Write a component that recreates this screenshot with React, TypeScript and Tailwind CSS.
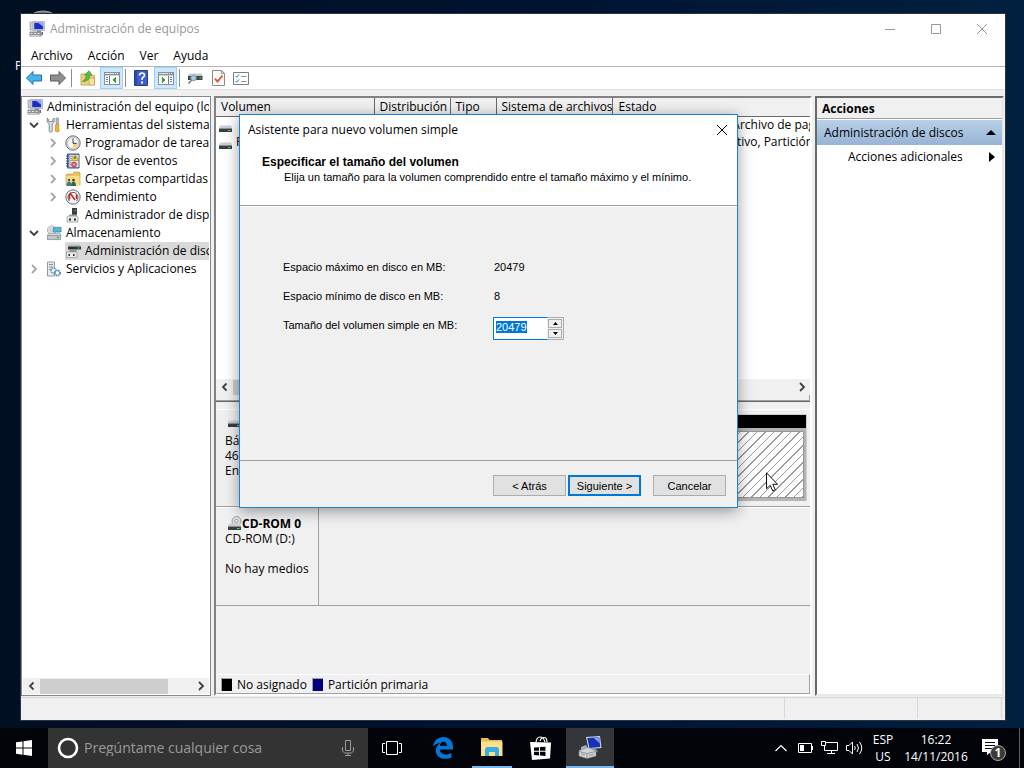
import React, { useEffect, useRef } from 'react';

type IconProps = { className?: string };

const ComputerIcon: React.FC<IconProps> = ({ className = 'w-4 h-4' }) => (
    <svg viewBox="0 0 16 16" className={`shrink-0 ${className}`} aria-hidden="true">
        <path d="M1 1h4v8H1z" fill="#c9ccd0" stroke="#8a8d90" strokeWidth=".6" />
        <path d="M4 .5h11.5v9H4z" fill="#dfe3e8" stroke="#8d949c" strokeWidth=".6" />
        <path d="M5.200 1.700h9v6.600h-9z" fill="#1c2fc0" />
        <path d="M9 1.700h5.200v4z" fill="#8ea4f4" />
        <path d="M8 9.500h4v1.500H8z" fill="#8b9097" />
        <path d="M.5 10.500h12v5H.5z" fill="#8d9298" />
        <path d="M1.500 12h2v1h-2zM5 12h2v1H5zM8.500 12h2v1h-2zM1.500 14h9v.8h-9z" fill="#e4e6e8" />
        <path d="M12.500 11h1.500v3h-1.500z" fill="#5f666d" />
    </svg>
);

const ToolsIcon = () => (
    <svg viewBox="0 0 16 16" className="w-4 h-4 shrink-0" aria-hidden="true">
        <path d="M1.200 1v4l2 2v7.500q1.500 1.500 3 0V7l2-2V1L6.700 2.500V4.500h-4V2.500z" fill="#dcdfe1" stroke="#6f7478" strokeWidth=".8" />
        <path d="M10 1h2.500v6H10z" fill="#b4b9bd" stroke="#777c80" strokeWidth=".5" />
        <path d="M9.200 8q2-1.500 4 0l-.6 2 .6 4q-2 2-4 0l.6-4z" fill="#f2b632" stroke="#b27a0c" strokeWidth=".6" />
    </svg>
);

const ClockIcon = () => (
    <svg viewBox="0 0 16 16" className="w-4 h-4 shrink-0" aria-hidden="true">
        <circle cx="8" cy="8" r="7.200" fill="#d9dde0" stroke="#6c7276" />
        <circle cx="8" cy="8" r="5.400" fill="#fdfdf8" stroke="#a7adb1" strokeWidth=".6" />
        <path d="M8 8h5a5 5 0 0 1-5 5z" fill="#f3ce83" />
        <path d="M8 3.500V8.300h3.500" fill="none" stroke="#33383c" />
    </svg>
);

const EventIcon = () => (
    <svg viewBox="0 0 16 16" className="w-4 h-4 shrink-0" aria-hidden="true">
        <path d="M2.500 1h11.500v14H2.500z" fill="#7d99c6" stroke="#3b5888" />
        <path d="M4.500 2h9v12h-9z" fill="#d8e3f3" />
        <path d="M5 3.500h3M5 5.500h2M5 7.500h1.500M5 9.500h1M5 11.500h1" stroke="#6f8fbe" strokeWidth=".8" />
        <path d="M1 3h3M1 5.500h3M1 8h3M1 10.500h3M1 13h3" stroke="#50565c" />
        <path d="M10 1.500l3.500 6H6.500z" fill="#f9d62e" stroke="#a38300" strokeWidth=".6" />
        <path d="M10 3.500v2.500" stroke="#222" />
        <circle cx="9" cy="11.500" r="2.800" fill="#d8383b" />
        <path d="M7.800 10.300l2.400 2.400M10.200 10.300l-2.400 2.400" stroke="#fff" strokeWidth=".8" />
    </svg>
);

const SharedFolderIcon = () => (
    <svg viewBox="0 0 16 16" className="w-4 h-4 shrink-0" aria-hidden="true">
        <path d="M1 4l1-1h6l1-2h5l1 1v12H1z" fill="#e9c55c" stroke="#b08e31" strokeWidth=".6" />
        <path d="M1.500 5h13v9.500h-13z" fill="#f7de8e" />
        <circle cx="4" cy="9" r="1.300" fill="#7b4f2e" />
        <path d="M1.500 15q0-4.500 2.500-4.500t2.500 4.500z" fill="#3a7b9c" />
        <circle cx="8.500" cy="9" r="1.300" fill="#4b3120" />
        <path d="M6 15q0-4.500 2.500-4.500t2.500 4.500z" fill="#2e6a42" />
    </svg>
);

const GaugeIcon = () => (
    <svg viewBox="0 0 16 16" className="w-4 h-4 shrink-0" aria-hidden="true">
        <circle cx="8" cy="8" r="7.200" fill="#eceeef" stroke="#6c7276" />
        <path d="M4.500 12a5 5 0 1 1 7 0" fill="#fff" stroke="#3b4044" strokeWidth=".8" />
        <path d="M4.500 10.500v-5l1-1 4.500 6.500M11.500 5.500V10" fill="none" stroke="#d02424" strokeWidth="1.600" />
    </svg>
);

const DeviceIcon = () => (
    <svg viewBox="0 0 16 16" className="w-4 h-4 shrink-0" aria-hidden="true">
        <path d="M7 1h5v7H7z" fill="#3a3d40" />
        <path d="M9.500 3h1.500v1H9.500z" fill="#3bdd3b" />
        <path d="M4 7.500h8v2H4z" fill="#9fa3a6" />
        <path d="M3 9h9l1 1.500V15H2v-4.500z" fill="#e7e7e7" stroke="#8b8f92" strokeWidth=".7" />
        <path d="M4 11.500h2v2H4zM9 11.500h2v2H9z" fill="#26292b" />
    </svg>
);

const StorageIcon = () => (
    <svg viewBox="0 0 17 16" className="w-4 h-4 shrink-0" aria-hidden="true">
        <circle cx="6" cy="5" r="4.500" fill="#dfe2e4" stroke="#92989c" strokeWidth=".7" />
        <circle cx="6" cy="5" r="1.200" fill="#fff" stroke="#8b9094" strokeWidth=".6" />
        <path d="M8 2h8v5H8z" fill="#55b6de" stroke="#2d7fa6" strokeWidth=".7" />
        <path d="M3 8.500h12l1 2H1.500z" fill="#eceeef" stroke="#84898d" strokeWidth=".6" />
        <path d="M1.500 10.500h14V15h-14z" fill="#c3c7ca" stroke="#74797d" strokeWidth=".7" />
        <path d="M11.500 12h2v1.500h-2z" fill="#24b924" />
    </svg>
);

const DiskMgmtIcon = () => (
    <svg viewBox="0 0 16 16" className="w-4 h-4 shrink-0" aria-hidden="true">
        <path d="M4 1.500h11l1 2H3z" fill="#b9bdc0" />
        <path d="M3 3.500h13v3H3z" fill="#303336" />
        <path d="M12.500 4.500h2v1h-2z" fill="#33e033" />
        <path d="M4.500 7h7v2h-7z" fill="#8f9396" />
        <path d="M1.500 9h10.500v5.500H1.500z" fill="#ececec" stroke="#8b8f92" strokeWidth=".7" />
        <path d="M3.500 11h1.500v2H3.500zM8 11h1.500v2H8z" fill="#26292b" />
    </svg>
);

const ServicesIcon = () => (
    <svg viewBox="0 0 16 16" className="w-4 h-4 shrink-0" aria-hidden="true">
        <path d="M1.500 1h7v14h-7z" fill="#e8eaec" stroke="#7e8488" strokeWidth=".8" />
        <path d="M3 3.500h4M3 6h4M3 8.500h3" stroke="#868c91" />
        <circle cx="7.500" cy="9.500" r="2.400" fill="#fff" stroke="#6e93b4" strokeWidth="1.600" strokeDasharray="1.500 .6" />
        <circle cx="11.500" cy="12" r="2.600" fill="#fff" stroke="#5c8bb6" strokeWidth="1.900" strokeDasharray="1.500 .6" />
    </svg>
);

const DriveIcon: React.FC<{ cd?: boolean }> = ({ cd }) => (
    <svg viewBox="0 0 15 15" className="w-[15px] h-[15px] shrink-0" aria-hidden="true">
        {cd && <circle cx="9.500" cy="5" r="4.500" fill="#dfe1e2" stroke="#989c9e" />}
        {cd && <circle cx="9.500" cy="5" r="1.700" fill="#f4f4f4" stroke="#989c9e" />}
        <path d="M2 7.500h11l1 3H1z" fill="#cbcfd3" />
        <path d="M1 10.500h13v3.500H1z" fill="#3b3e41" />
        <path d="M10 12h2.500v1H10z" fill="#3fe53f" />
    </svg>
);

const Chevron: React.FC<{ dir: 'left' | 'right' | 'down'; light?: boolean }> = ({ dir, light }) => {
    const d = { left: 'M6.500 1.500L3 5l3.500 3.500', right: 'M3 1L7 5 3 9', down: 'M1 3l4 4 4-4' }[dir];
    return (
        <svg viewBox="0 0 10 10" className="w-[10px] h-[10px] shrink-0" aria-hidden="true">
            <path d={d} fill="none" stroke={light ? '#a6a6a6' : '#404040'} strokeWidth="1.800" />
        </svg>
    );
};

const Arrow: React.FC<{ forward?: boolean }> = ({ forward }) => (
    <svg viewBox="0 0 18 16" className="w-[18px] h-4" aria-hidden="true">
        {forward
            ? <path d="M16.500 8L10 1.500V5H1.500v6H10v3.500z" fill="#8f8f8f" stroke="#5c5c5c" />
            : <path d="M1.500 8L8 1.500V5h8.500v6H8v3.500z" fill="#45b4ec" stroke="#1f71b4" />}
    </svg>
);

const PaneIcon: React.FC<{ right?: boolean }> = ({ right }) => (
    <svg viewBox="0 0 16 16" className="w-4 h-4" shapeRendering="crispEdges" aria-hidden="true">
        <path d="M0 2h16v13H0z" fill="#8b9096" />
        <path d="M1 6h14v8H1z" fill="#fff" />
        <path d="M1 3h9v1H1z" fill="#dfe6ee" />
        <path d="M11 3h1v1h-1zM13 3h1v1h-1z" fill="#fff" />
        <path d="M1 5h14v1H1z" fill="#c9d0d8" />
        {right
            ? <path d="M10 6h1v8h-1zM12 7h2v1h-2zM12 9h2v1h-2zM12 11h2v1h-2z" fill="#6b7d92" />
            : <path d="M5 6h1v8H5zM2 7h2v1H2zM2 9h2v1H2zM2 11h2v1H2z" fill="#6b7d92" />}
        {right
            ? <path d="M4 7l4 3-4 3z" fill="#32a532" />
            : <path d="M12 7l-4 3 4 3z" fill="#32a532" />}
    </svg>
);

const UpFolderIcon = () => (
    <svg viewBox="0 0 16 16" className="w-4 h-4" aria-hidden="true">
        <path d="M1 4h5l1 1.500h7.500V15H1z" fill="#efd182" stroke="#b99a45" strokeWidth=".8" />
        <path d="M9 8h5.500v7H9z" fill="#f6e0a0" stroke="#b99a45" strokeWidth=".6" />
        <path d="M2.500 11.500q3-1.500 4-6.500H4.500L9 .8 12 5h-2q-1 7-7.500 6.500z" fill="#55c03c" stroke="#2d8820" strokeWidth=".6" />
    </svg>
);

const HelpIcon = () => (
    <svg viewBox="0 0 14 16" className="w-[14px] h-4" aria-hidden="true">
        <path d="M.5.500h13v15H.5z" fill="#3c5fc8" stroke="#223f91" />
        <path d="M1 1h2v14H1z" fill="#2c4aa6" />
        <path d="M5.500 5.500q0-2.500 2.500-2.500t2.500 2.300q0 1.200-1.400 2T8 9.800" fill="none" stroke="#fff" strokeWidth="1.700" />
        <path d="M7 11.500h2v2H7z" fill="#fff" />
    </svg>
);

const RescanIcon = () => (
    <svg viewBox="0 0 16 16" className="w-4 h-4" aria-hidden="true">
        <path d="M2 3.500h12.500l1 2.500H1z" fill="#c5c9cc" />
        <path d="M1 6h14.500v4H1z" fill="#3d4448" />
        <path d="M12.500 7.500h2v1h-2z" fill="#3fe53f" />
        <circle cx="6.500" cy="8" r="2.800" fill="#a5c8df" stroke="#8d969c" />
        <path d="M4.500 10.300L1.500 13.500" stroke="#777" strokeWidth="1.600" />
    </svg>
);

const CheckPageIcon = () => (
    <svg viewBox="0 0 13 16" className="w-[13px] h-4" aria-hidden="true">
        <path d="M.5.500h9l3 3v12H.5z" fill="#fafafa" stroke="#8d8d8d" />
        <path d="M9.500.500v3h3" fill="none" stroke="#8d8d8d" />
        <path d="M3 8.500l2.500 3 5-6" fill="none" stroke="#e2501c" strokeWidth="1.800" />
    </svg>
);

const ListIcon = () => (
    <svg viewBox="0 0 16 13" className="w-4 h-[13px]" aria-hidden="true">
        <path d="M.5.500h15v12H.5z" fill="#fff" stroke="#7b7f83" />
        <path d="M2.500 4l1.200 1.200L6 2.500M2.500 9l1.200 1.200L6 7.500" fill="none" stroke="#2f76b8" />
        <path d="M8 4.500h5.500M8 9.500h5.500" stroke="#8d9297" />
    </svg>
);

const treeItems = [
    { label: 'Administración del equipo (local)', icon: <ComputerIcon />, pad: 'pl-[4px]' },
    { label: 'Herramientas del sistema', icon: <ToolsIcon />, pad: 'pl-[6px]', chevron: 'down' as const },
    { label: 'Programador de tareas', icon: <ClockIcon />, pad: 'pl-[25px]', chevron: 'right' as const },
    { label: 'Visor de eventos', icon: <EventIcon />, pad: 'pl-[25px]', chevron: 'right' as const },
    { label: 'Carpetas compartidas', icon: <SharedFolderIcon />, pad: 'pl-[25px]', chevron: 'right' as const },
    { label: 'Rendimiento', icon: <GaugeIcon />, pad: 'pl-[25px]', chevron: 'right' as const },
    { label: 'Administrador de dispositivos', icon: <DeviceIcon />, pad: 'pl-[42px]' },
    { label: 'Almacenamiento', icon: <StorageIcon />, pad: 'pl-[6px]', chevron: 'down' as const },
    { label: 'Administración de discos', icon: <DiskMgmtIcon />, pad: 'ml-[42px]', selected: true },
    { label: 'Servicios y Aplicaciones', icon: <ServicesIcon />, pad: 'pl-[6px]', chevron: 'right' as const },
];

const volumes = [
    { name: '', status: 'Correcto (Arranque, Archivo de paginación, Volcado)' },
    { name: 'Reservado para el sistema', status: 'Correcto (Sistema, Activo, Partición primaria)' },
];

const headCell = 'h-[18px] p-0 pl-[5px] font-normal text-left whitespace-nowrap border-r border-[#696969] bg-[#f0f0f0]';
const iconButton = 'flex items-center justify-center h-[22px] w-6';
const wideButton = 'flex items-center justify-center h-[22px] w-[26px]';
const activeButton = 'flex items-center justify-center h-[22px] w-[23px] bg-[#cce8ff] border border-[#99d1ff]';

const TitleBar = () => (
    <header className="flex items-center h-[31px] pl-[8px] pb-[2px] bg-white text-[#999]">
        <ComputerIcon />
        <h1 className="pl-[5px] flex-1">Administración de equipos</h1>
        <button type="button" aria-label="Minimizar" className="w-[46px] flex justify-center">
            <svg viewBox="0 0 10 10" className="w-[10px] h-[10px]"><path d="M0 5.500h10" stroke="#999" /></svg>
        </button>
        <button type="button" aria-label="Maximizar" className="w-[46px] flex justify-center">
            <svg viewBox="0 0 10 10" className="w-[10px] h-[10px]"><path d="M.5.500h9v9h-9z" fill="none" stroke="#999" /></svg>
        </button>
        <button type="button" aria-label="Cerrar" className="w-[46px] flex justify-center">
            <svg viewBox="0 0 10 10" className="w-[10px] h-[10px]"><path d="M0 0l10 10M10 0L0 10" stroke="#999" /></svg>
        </button>
    </header>
);

const Toolbar = () => (
    <div className="flex items-center h-[23px] pl-[1px] bg-white border-b border-[#dfdfdf]">
        <button type="button" aria-label="Atrás" className={iconButton}><Arrow /></button>
        <button type="button" aria-label="Adelante" className={iconButton}><Arrow forward /></button>
        <span className="w-px h-[18px] ml-[1px] mr-[4px] bg-[#8d8d8d]" />
        <button type="button" aria-label="Subir" className={iconButton}><UpFolderIcon /></button>
        <button type="button" aria-label="Mostrar árbol" className={activeButton}><PaneIcon /></button>
        <span className="w-px h-[18px] mx-[2px] bg-[#8d8d8d]" />
        <button type="button" aria-label="Ayuda" className={wideButton}><HelpIcon /></button>
        <button type="button" aria-label="Mostrar acciones" className={activeButton}><PaneIcon right /></button>
        <span className="w-px h-[18px] mx-[2px] bg-[#8d8d8d]" />
        <button type="button" aria-label="Volver a examinar" className={wideButton}><RescanIcon /></button>
        <button type="button" aria-label="Propiedades" className="flex items-center justify-center h-[22px] w-5"><CheckPageIcon /></button>
        <button type="button" aria-label="Configuración" className={wideButton}><ListIcon /></button>
    </div>
);

const TreePanel = () => (
    <nav aria-label="Consola" className="w-[190px] shrink-0 flex flex-col bg-white border border-[#828790] p-px">
        <ul className="flex-1">
            {treeItems.map(item => (
                <li key={item.label} className={`flex items-center h-[18px] overflow-hidden ${item.pad} ${item.selected ? 'bg-[#d9d9d9]' : ''}`}>
                    {item.chevron && (
                        <span className="w-[17px] shrink-0">
                            <Chevron dir={item.chevron} light={item.chevron === 'right'} />
                        </span>
                    )}
                    {item.icon}
                    <span className="flex-1 leading-[18px] pl-[4px] whitespace-nowrap overflow-hidden">{item.label}</span>
                </li>
            ))}
        </ul>
        <div className="flex items-center h-[16px] bg-[#f0f0f0]">
            <button type="button" aria-label="Izquierda" className="w-[17px] flex justify-center"><Chevron dir="left" /></button>
            <div className="flex-1 h-[15px]"><div className="w-[84%] h-full bg-[#cdcdcd]" /></div>
            <button type="button" aria-label="Derecha" className="w-[17px] flex justify-center"><Chevron dir="right" /></button>
        </div>
    </nav>
);

const DiskPanel = () => (
    <main className="flex-1 min-w-0 flex flex-col border-2 border-t-[#828282] border-l-[#828282] border-r-white border-b-white bg-[#f0f0f0]">
        <div className="flex flex-col h-[303px] overflow-hidden bg-white">
            <table className="w-full table-fixed border-collapse">
                <colgroup>
                    <col className="w-[158px]" />
                    <col className="w-[76px]" />
                    <col className="w-[46px]" />
                    <col className="w-[116px]" />
                    <col />
                </colgroup>
                <thead>
                    <tr className="border-b border-[#696969]">
                        <th className={headCell}>Volumen</th>
                        <th className={headCell}>Distribución</th>
                        <th className={headCell}>Tipo</th>
                        <th className={headCell}>Sistema de archivos</th>
                        <th className="h-[18px] p-0 pl-[6px] font-normal text-left bg-[#f0f0f0]">Estado</th>
                    </tr>
                </thead>
                <tbody>
                    {volumes.map(volume => (
                        <tr key={volume.status} className="h-[17px]">
                            <td className="p-0">
                                <span className="flex items-center h-[17px] pl-[2px] gap-[3px] whitespace-nowrap overflow-hidden"><DriveIcon />{volume.name}</span>
                            </td>
                            <td className="p-0" />
                            <td className="p-0" />
                            <td className="p-0" />
                            <td className="p-0 pl-[6px] whitespace-nowrap overflow-hidden">{volume.status}</td>
                        </tr>
                    ))}
                </tbody>
            </table>
            <div className="flex-1" />
            <div className="flex items-center h-[16px] bg-[#f0f0f0]">
                <button type="button" aria-label="Izquierda" className="w-[17px] flex justify-center"><Chevron dir="left" /></button>
                <div className="flex-1 h-[15px]"><div className="w-[70%] h-full bg-[#cdcdcd]" /></div>
                <button type="button" aria-label="Derecha" className="w-[17px] flex justify-center"><Chevron dir="right" /></button>
            </div>
            <div className="h-[6px] bg-[#f0f0f0] border-r border-b border-[#a0a0a0]" />
        </div>
        <div className="h-[3px] border-t border-[#696969]" />

        {/* Disk 0 */}
        <section className="flex h-[103px] pt-[5px] border-b border-[#a0a0a0]">
            <div className="w-[102px] pl-[9px] pt-[3px] leading-[15px] border-t border-white whitespace-nowrap">
                <h2 className="flex items-start h-[20px] pl-[2px] font-bold"><DriveIcon />Disco 0</h2>
                <p>Básico</p>
                <p>46,00 GB</p>
                <p>En pantalla</p>
            </div>
            <div className="flex-1 flex justify-end pt-[4px] pr-[3px] border-t border-white">
                <div className="w-[220px] flex flex-col h-[87px] bg-[#b4b4b4] border-t border-r border-[#d0d0d0]">
                    <div className="h-[13px] bg-black" />
                    <div className="flex-1 mt-[3px] mr-[2px] mb-[3px] border border-[#969696] bg-[repeating-linear-gradient(135deg,#fff_0px,#fff_5px,#9a9a9a_5px,#9a9a9a_6px)]" />
                </div>
            </div>
        </section>

        {/* CD-ROM */}
        <section className="flex h-[99px] border-b border-[#a0a0a0]">
            <div className="w-[103px] pl-[9px] pt-[5px] leading-[15px] border-t border-r border-t-white border-r-[#a0a0a0] whitespace-nowrap">
                <h2 className="flex items-end h-[18px] pl-[2px] font-bold"><DriveIcon cd />CD-ROM 0</h2>
                <p>CD-ROM (D:)</p>
                <p className="pt-[15px]">No hay medios</p>
            </div>
            <div className="flex-1 border-t border-white" />
        </section>

        <div className="flex-1" />
        <footer className="flex items-center h-[20px] pl-[4px] pt-px gap-[5px] border border-t-white border-l-transparent border-r-[#a0a0a0] border-b-[#a0a0a0]">
            <span className="w-[11px] h-[13px] bg-black border-t border-l border-[#a0a0a0]" />
            <span>No asignado</span>
            <span className="w-[11px] h-[13px] bg-[#000080] border-t border-l border-[#a0a0a0]" />
            <span>Partición primaria</span>
        </footer>
    </main>
);

const ActionsPanel = () => (
    <aside className="w-[189px] shrink-0 flex flex-col bg-white border-2 border-t-[#696969] border-l-[#696969] border-r-[#e8e8e8] border-b-[#e8e8e8]">
        <h2 className="h-[21px] leading-[21px] pl-[5px] font-bold bg-[#f0f0f0] border-b border-[#a0a0a0]">Acciones</h2>
        <button type="button" className="flex items-center justify-between h-[25px] mt-px pl-[7px] pr-[6px] bg-linear-to-b from-[#b8d0ea] to-[#98b3d4]">
            Administración de discos
            <svg viewBox="0 0 10 5" className="w-[10px] h-[5px]" aria-hidden="true"><path d="M0 5l5-5 5 5z" /></svg>
        </button>
        <button type="button" className="flex items-center justify-between h-[23px] pl-[31px] pr-[7px]">
            Acciones adicionales
            <svg viewBox="0 0 6 10" className="w-[6px] h-[10px]" aria-hidden="true"><path d="M0 0l6 5-6 5z" /></svg>
        </button>
    </aside>
);

const VolumeWizard = () => {
    const sizeRef = useRef<HTMLInputElement>(null);

    // Size field starts focused with its value selected
    useEffect(() => {
        sizeRef.current?.focus();
        sizeRef.current?.select();
    }, []);

    return (
        <div
            role="dialog"
            aria-labelledby="wizard-title"
            className="absolute left-[239px] top-[114px] w-[499px] h-[394px] flex flex-col bg-[#f0f0f0] border border-[#1883d7] shadow-[0_3px_14px_rgba(0,0,0,0.4)] font-['Liberation_Sans',Arial,sans-serif] text-[11px]"
        >
            <div className="h-[91px] bg-white border-b border-[#a0a0a0]">
                <div className="flex items-center justify-between h-[30px] pl-[8px] pr-[9px]">
                    <h2 id="wizard-title" className="font-['Open_Sans','Noto_Sans',sans-serif] text-[12px]">Asistente para nuevo volumen simple</h2>
                    <button type="button" aria-label="Cerrar">
                        <svg viewBox="0 0 12 12" className="w-3 h-3"><path d="M1 1l10 10M11 1L1 11" stroke="#000" /></svg>
                    </button>
                </div>
                <h3 className="pt-[10px] pl-[22px] leading-[15px] text-[12px] font-bold">Especificar el tamaño del volumen</h3>
                <p className="pl-[44px] leading-[15px]">Elija un tamaño para la volumen comprendido entre el tamaño máximo y el mínimo.</p>
            </div>

            <form className="flex-1 flex flex-col" onSubmit={e => e.preventDefault()}>
                <div className="flex-1 grid grid-cols-[210px_1fr] auto-rows-[29px] content-start items-center pl-[43px] pt-[45px] border-t border-white">
                    <span>Espacio máximo en disco en MB:</span>
                    <output className="pl-px">20479</output>
                    <span>Espacio mínimo de disco en MB:</span>
                    <output className="pl-px">8</output>
                    <label htmlFor="size">Tamaño del volumen simple en MB:</label>
                    <div className="flex w-[71px] h-[23px] mt-[8px] border border-[#acacac]">
                        <input
                            ref={sizeRef}
                            id="size"
                            defaultValue="20479"
                            className="-m-px w-[54px] h-[23px] pl-[2px] pb-[3px] bg-white border border-r-0 border-[#0078d7] outline-none selection:bg-[#0078d7] selection:text-white"
                        />
                        <div className="flex flex-col gap-px w-[17px] ml-[1px] p-px">
                            <button type="button" aria-label="Aumentar" className="flex-1 flex items-center justify-center border border-[#acacac]">
                                <svg viewBox="0 0 5 3" className="w-[5px] h-[3px]"><path d="M0 3L2.500 0 5 3z" /></svg>
                            </button>
                            <button type="button" aria-label="Disminuir" className="flex-1 flex items-center justify-center border border-[#acacac]">
                                <svg viewBox="0 0 5 3" className="w-[5px] h-[3px]"><path d="M0 0h5L2.500 3z" /></svg>
                            </button>
                        </div>
                    </div>
                </div>
                <div className="flex justify-end items-start h-[47px] pt-[14px] pr-[11px] border-t border-[#a0a0a0]">
                    <button type="button" className="w-[73px] h-[21px] bg-[#e1e1e1] border border-[#adadad]">&lt; Atrás</button>
                    <button type="submit" className="w-[73px] h-[21px] ml-[2px] bg-[#e1e1e1] border-2 border-[#0078d7]">Siguiente &gt;</button>
                    <button type="button" className="w-[73px] h-[21px] ml-[12px] bg-[#e1e1e1] border border-[#adadad]">Cancelar</button>
                </div>
            </form>
        </div>
    );
};

const Taskbar = () => (
    <footer className="flex items-stretch h-10 shrink-0 bg-[#020409] text-white">
        <button type="button" aria-label="Inicio" className="w-12 flex items-center justify-center">
            <svg viewBox="0 0 16 16" className="w-4 h-4" fill="#fff"><path d="M0 2.300L6.500 1.400v6.200H0zM7.500 1.200L16 0v7.600H7.500zM0 8.500h6.500v6.200L0 13.800zM7.500 8.500H16V16l-8.500-1.200z" /></svg>
        </button>
        <label className="flex items-center w-[320px] pl-[9px] pr-[13px] gap-[5px] bg-[#333]">
            <svg viewBox="0 0 22 22" className="w-[22px] h-[22px] shrink-0" aria-hidden="true"><circle cx="11" cy="11" r="9" fill="none" stroke="#fff" strokeWidth="2.600" /></svg>
            <input type="text" aria-label="Buscar" placeholder="Pregúntame cualquier cosa" className="flex-1 min-w-0 bg-transparent outline-none text-[14px] placeholder:text-[#9a9a9a]" />
            <svg viewBox="0 0 14 18" className="w-[14px] h-[18px] shrink-0" fill="none" stroke="#9a9a9a" aria-hidden="true">
                <path d="M4.500 1.500h5v10h-5zM1.500 8v4l2 2h7l2-2V8M7 14v2.500M4 16.500h6" />
            </svg>
        </label>
        <button type="button" aria-label="Vista de tareas" className="w-12 flex items-center justify-center">
            <svg viewBox="0 0 20 14" className="w-5 h-[14px]" fill="none" stroke="#fff"><path d="M4.500.500h11v13h-11zM3 2.500H.5v9H3M17 2.500h2.500v9H17" /></svg>
        </button>
        <div className="flex gap-px pl-[3px]">
            <button type="button" aria-label="Edge" className="w-12 flex items-center justify-center">
                <svg viewBox="0 0 20 22" className="w-5 h-[22px]">
                    <path d="M0 9.500C1 3.500 5 0 10.500 0 16.500 0 20 4.500 20 10v2.500H6.800c.2 3.300 3 5 6.200 5 2 0 4-.6 5.500-1.500v4.200c-1.800 1-4 1.600-6.500 1.600-5.500 0-9.200-3.300-9.200-8.300 0-3.300 1.600-6 4.400-7.600C4 6.500 1.500 7.500 0 9.500zM6.900 9h7c0-2.700-1.200-4.300-3.400-4.300S7.100 6.500 6.900 9z" fill="#0078d7" />
                </svg>
            </button>
            <button type="button" aria-label="Explorador" className="w-12 flex justify-center px-1">
                <span className="w-full h-full flex items-center justify-center border-b-2 border-[#76b9ed]">
                    <svg viewBox="0 0 22 18" className="w-[22px] h-[18px]">
                        <path d="M0 0h7l1.500 2H21v4H0z" fill="#e8bd55" />
                        <path d="M0 3.500h21.500V18H0z" fill="#fde08d" />
                        <path d="M4 18v-7l1.500-2h11l1.500 2v7h-4v-4H8v4z" fill="#37ade0" />
                    </svg>
                </span>
            </button>
            <button type="button" aria-label="Tienda" className="w-12 flex items-center justify-center">
                <svg viewBox="0 0 22 24" className="w-[22px] h-6">
                    <path d="M6 6.500Q6.500 1 10 1t5 5M10 5q1-3.500 4-3.500T17 6" fill="none" stroke="#fff" strokeWidth="1.200" />
                    <path d="M0 6l21 .5L20 22.500 2 24z" fill="#fff" />
                    <path d="M4 11.500l5-.3v3.600H4zM10 11.100l5.500-.4v4.100H10zM4 15.800h5v3.700l-5-.5zM10 15.800h5.500v4.300l-5.500-.5z" fill="#05070b" />
                </svg>
            </button>
            <button type="button" aria-label="Administración de equipos" className="w-12 flex items-center justify-center bg-[#34363a] border-b-2 border-[#76b9ed]">
                <svg viewBox="0 0 24 24" className="w-6 h-6">
                    <path d="M8 2l14-1 1.500 12L10.500 14z" fill="#d6dbe2" />
                    <path d="M9.200 3l12-.9 1.100 10L11.500 13z" fill="#1730b8" />
                    <path d="M15 2.600l6.200-.5.800 6.500z" fill="#7d97ef" />
                    <path d="M13 14l4-.5 3 3-5 1z" fill="#9ba1a9" />
                    <path d="M3 12l5-2 3 5-8 1z" fill="#a9afb6" />
                    <path d="M1 15.500l9-3 8 3.500v5l-9 2.500-8-2.500z" fill="#d0d4d9" stroke="#81878f" strokeWidth=".6" />
                    <path d="M1 16.500l8 2 9-2M9 18.500V23M3 19l4 1M11 20.500l5-1.300" fill="none" stroke="#747a82" strokeWidth=".7" />
                </svg>
            </button>
        </div>

        <div className="flex-1" />
        <div className="flex items-center text-center leading-[17px]">
            <svg viewBox="0 0 12 8" className="w-3 h-2" fill="none" stroke="#fff" strokeWidth="1.200" aria-hidden="true"><path d="M.5 7L6 1.500 11.500 7" /></svg>
            <svg viewBox="0 0 16 10" className="w-4 h-[10px] ml-[11px]" fill="none" stroke="#fff" aria-hidden="true"><path d="M.5.500h13v9H.5zM14.500 3v4" /><path d="M2 2h4v6H2z" fill="#fff" stroke="none" /></svg>
            <svg viewBox="0 0 17 14" className="w-[17px] h-[14px] ml-[7px]" fill="none" stroke="#fff" aria-hidden="true"><path d="M5 1.500h11.500v8H3.500V5M10.500 9.500v3M6 12.500h8M.5.500h4v4h-4z" /></svg>
            <svg viewBox="0 0 17 14" className="w-[17px] h-[14px] ml-[8px]" fill="none" stroke="#fff" aria-hidden="true"><path d="M.5 4.500H3L6.500 1v12L3 9.500H.5zM8.500 5q1.500 2 0 4M11 3q3 4 0 8M13.500 1q4.500 6 0 12" /></svg>
            <div className="w-10"><p>ESP</p><p>US</p></div>
            <div className="w-[66px]"><p>16:22</p><p>14/11/2016</p></div>
            <button type="button" aria-label="Notificaciones" className="relative ml-[13px] mr-[12px] w-[25px] h-[26px]">
                <svg viewBox="0 0 25 26" className="w-[25px] h-[26px]">
                    <path d="M0 4h16v13h-7l-4 3v-3H0z" fill="#fff" />
                    <path d="M3 7.500h10M3 10.500h10M3 13.500h7" stroke="#05070b" />
                    <circle cx="16" cy="18" r="7.500" fill="#3a3a3a" stroke="#aaa" />
                </svg>
                <span className="absolute left-[9px] top-[10px] w-[14px] text-[12px] leading-[16px] font-bold">1</span>
            </button>
            <span className="w-[5px] h-10 border-l border-[#5c5e62]" />
        </div>
    </footer>
);

const App: React.FC = () => (
    <div className="relative min-h-screen flex flex-col overflow-hidden bg-linear-to-r from-[#010f22] via-[#001230] to-[#01203f] font-['Open_Sans','Noto_Sans',sans-serif] text-[12px] leading-[16px] text-black">
        {/* Desktop icon behind the window */}
        <div className="absolute left-[15px] top-[10px] w-[56px] text-white">
            <svg viewBox="0 0 26 50" className="w-[26px] h-[48px] ml-[15px]" aria-hidden="true"><path d="M0 5Q13-3 26 5" fill="#6d7378" stroke="#a6abb0" /></svg>
            <span>Papelera</span>
        </div>

        <div className="relative flex-1 flex flex-col mt-[14px] ml-[21px] mr-[19px] mb-2 bg-[#f0f0f0] outline outline-[#2b3440]">
            <TitleBar />
            <div className="flex items-center h-[22px] pl-[10px] gap-[15px] bg-white border-b border-[#b4b4b4]">
                <button type="button">Archivo</button>
                <button type="button">Acción</button>
                <button type="button">Ver</button>
                <button type="button">Ayuda</button>
            </div>
            <Toolbar />
            <div className="flex-1 flex gap-[3px] pt-[6px] pb-px pr-px">
                <TreePanel />
                <DiskPanel />
                <ActionsPanel />
            </div>
            <div className="flex justify-end h-[23px] pr-[3px] pb-[2px] border-t border-[#d7d7d7]">
                <span className="w-[133px] border-l border-[#d7d7d7]" />
                <span className="w-[85px] border-x border-[#d7d7d7]" />
            </div>
        </div>

        <Taskbar />
        <VolumeWizard />
        <svg viewBox="0 0 12 20" className="absolute left-[766px] top-[472px] w-3 h-5" aria-hidden="true">
            <path d="M.5.800v16l3.700-3.500 2.500 5.600 2.600-1.200-2.500-5.400h4.800z" fill="#fff" stroke="#111" />
        </svg>
    </div>
);

export default App;
